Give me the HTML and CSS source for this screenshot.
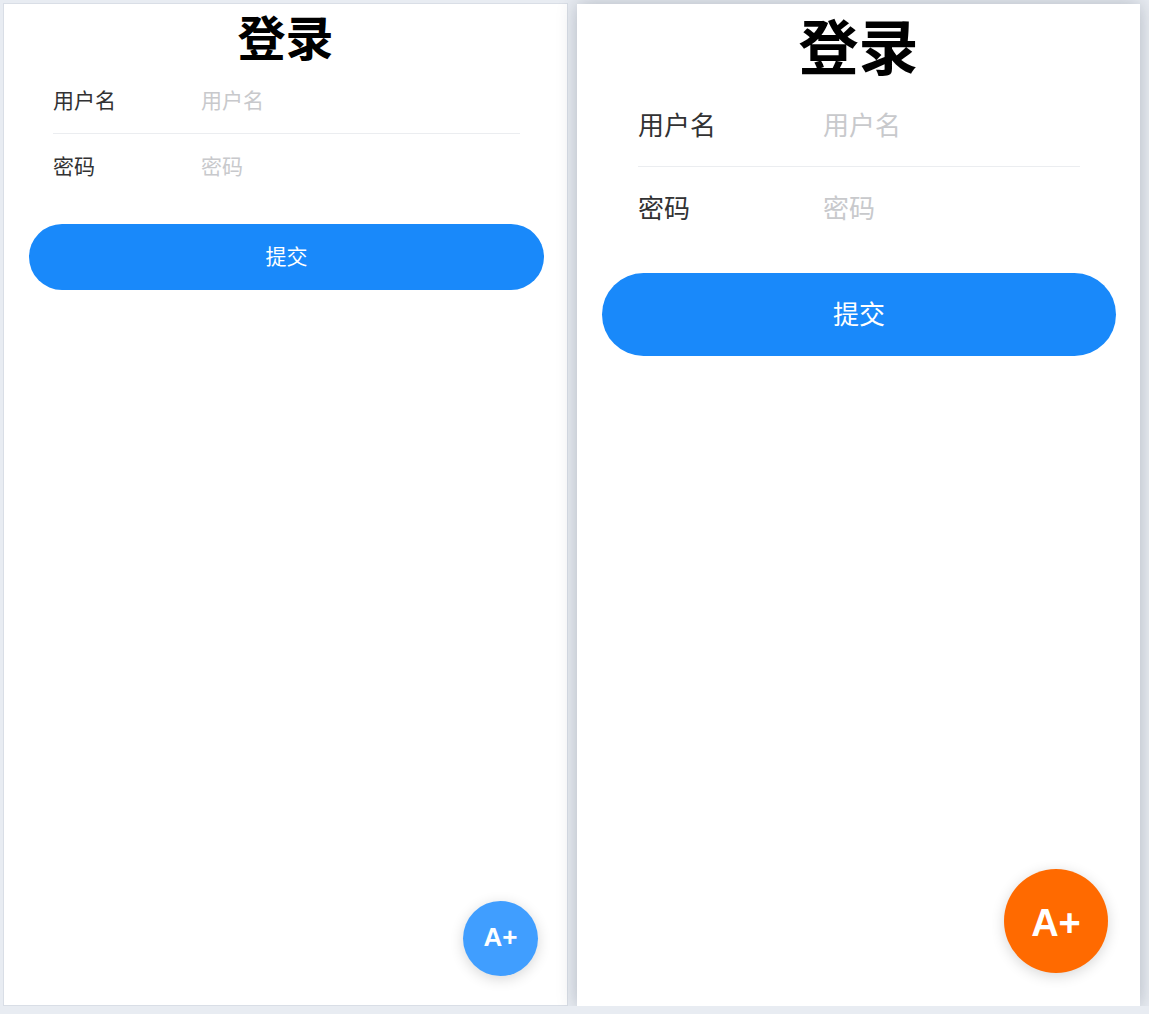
FILE: index.html
```html
<!DOCTYPE html>
<html lang="zh-CN">
<head>
  <meta charset="UTF-8">
  <meta name="viewport" content="width=device-width, initial-scale=1.0">
  <title>登录</title>
  <link rel="stylesheet" href="styles.css">
</head>
<body>
  <div class="screens">
    <div class="phone phone-sm">
      <h1 class="title">登录</h1>
      <div class="field">
        <label for="username-sm">用户名</label>
        <input class="input-field" type="text" id="username-sm" placeholder="用户名">
      </div>
      <div class="field">
        <label for="password-sm">密码</label>
        <input class="input-field" type="password" id="password-sm" placeholder="密码">
      </div>
      <button class="submit">提交</button>
      <button class="fab">A+</button>
    </div>

    <div class="phone phone-lg">
      <h1 class="title">登录</h1>
      <div class="field">
        <label for="username-lg">用户名</label>
        <input class="input-field" type="text" id="username-lg" placeholder="用户名">
      </div>
      <div class="field">
        <label for="password-lg">密码</label>
        <input class="input-field" type="password" id="password-lg" placeholder="密码">
      </div>
      <button class="submit">提交</button>
      <button class="fab">A+</button>
    </div>
  </div>
</body>
</html>
```

FILE: styles.css
```css
body { margin: 0; background: #e8ecf2; font-family: "Noto Sans CJK SC", "Noto Sans", sans-serif; }
.screens { display: flex; align-items: flex-start; gap: 9px; padding: 3px 0 0 3px; }

.phone { position: relative; width: 563px; background: #fff; }
.phone-sm { height: 1001px; border: 1px solid #d9dee6; }
.phone-lg { height: 1002px; margin-top: 1px; box-shadow: 0 0 18px rgba(40, 50, 70, 0.28); }

.title { margin: 0; text-align: center; font-weight: 700; color: #000; }
.field { display: flex; align-items: center; }
.field label { flex: none; color: #323233; }
.input-field { flex: 1; min-width: 0; border: none; outline: none; padding: 0; background: transparent; font: inherit; color: #323233; }
.input-field::placeholder { color: #c8c9cc; }
.field:first-of-type { border-bottom: 1px solid #ebedf0; }

.submit { display: block; border: none; background: #1989fa; color: #fff; font-family: inherit; cursor: pointer; }

.fab { position: absolute; border: none; border-radius: 50%; color: #fff; font-family: "Liberation Sans", Arial, sans-serif; font-weight: 700; box-shadow: 0 3px 14px rgba(0, 0, 0, 0.16); cursor: pointer; }

/* small screen */
.phone-sm .title { font-size: 48px; line-height: 62px; padding-bottom: 2px; }
.phone-sm .field { margin: 0 47px 0 49px; font-size: 21px; line-height: 36px; padding: 13px 0 17px; }
.phone-sm .field:first-of-type { padding: 13px 0 16px; }
.phone-sm .field label { width: 148px; }
.phone-sm .submit { width: 515px; height: 66px; margin: 24px 0 0 25px; padding: 0 0 4px; border-radius: 33px; font-size: 21px; }
.phone-sm .fab { right: 29px; bottom: 29px; width: 75px; height: 75px; padding: 0 0 3px; background: #409eff; font-size: 26px; }

/* large screen */
.phone-lg .title { font-size: 60px; line-height: 80px; }
.phone-lg .field { margin: 0 60px 0 61px; font-size: 26px; line-height: 37px; padding: 21px 0 25px; }
.phone-lg .field:first-of-type { padding: 21px 0 24px; }
.phone-lg .field label { width: 185px; }
.phone-lg .submit { width: 514px; height: 83px; margin: 23px 0 0 25px; padding: 0 0 4px; border-radius: 42px; font-size: 26px; }
.phone-lg .fab { right: 32px; bottom: 33px; width: 104px; height: 104px; padding: 4px 0 0; background: #ff6a00; font-size: 38px; }
```
